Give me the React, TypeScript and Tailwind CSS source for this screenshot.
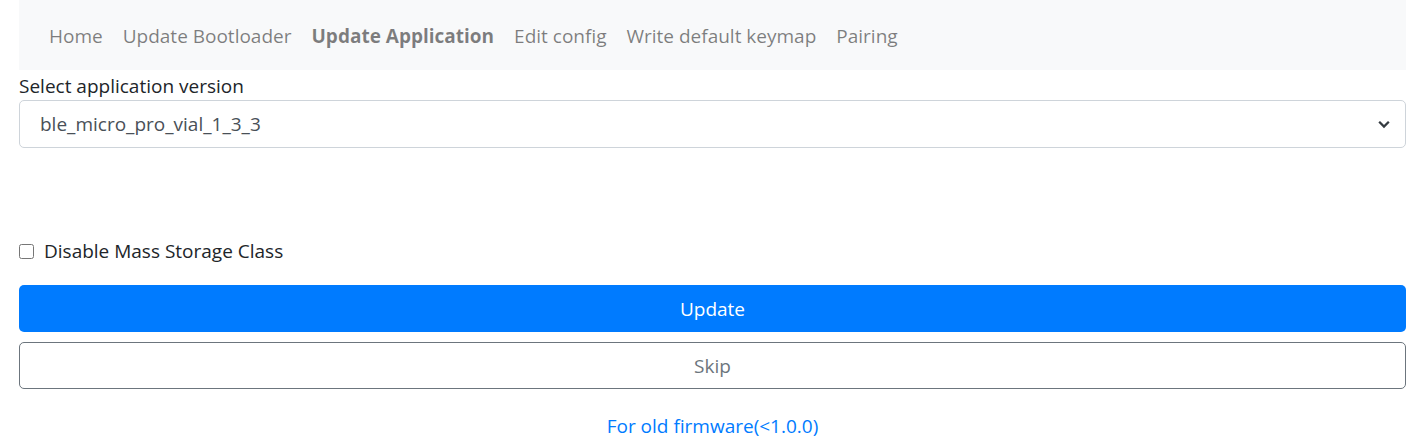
const links = [
  { label: 'Home', active: false },
  { label: 'Update Bootloader', active: false },
  { label: 'Update Application', active: true },
  { label: 'Edit config', active: false },
  { label: 'Write default keymap', active: false },
  { label: 'Pairing', active: false },
];

export default function App() {
  return (
    <div className="min-h-[438px] bg-white px-[19px] font-['Open_Sans',sans-serif] text-[19px] leading-[30px] text-[#212529]">
      <nav className="flex h-[70px] items-center bg-[#f8f9fa] px-[20px] pt-[2px]">
        {links.map((link) => (
          <a
            key={link.label}
            href="#"
            className={`px-[10px] text-black/50 ${link.active ? 'font-bold' : ''}`}
          >
            {link.label}
          </a>
        ))}
      </nav>

      <label className="block pt-[2px] leading-[28px]">Select application version</label>
      <div className="relative">
        <select className="h-[48px] w-full appearance-none rounded-[5px] border border-[#ced4da] bg-white pl-[20px] pr-[40px] text-[#495057]">
          <option>ble_micro_pro_vial_1_3_3</option>
        </select>
        <svg
          className="pointer-events-none absolute right-[15px] top-1/2 h-[14px] w-[14px] -translate-y-1/2"
          viewBox="0 0 16 16"
        >
          <path d="M2.5 5.5 8 11l5.5-5.5" fill="none" stroke="#343a40" strokeWidth="2.6" />
        </svg>
      </div>

      {/* empty progress area */}
      <div className="h-[88px]" />

      <label className="flex items-center gap-[10px]">
        <input type="checkbox" className="h-[15px] w-[15px]" />
        Disable Mass Storage Class
      </label>

      <div className="mt-[19px] flex flex-col gap-[10px]">
        <button className="h-[47px] w-full rounded-[5px] bg-[#007bff] text-white">Update</button>
        <button className="h-[47px] w-full rounded-[5px] border border-[#6c757d] bg-white text-[#6c757d]">
          Skip
        </button>
      </div>

      <div className="mt-[22px] text-center">
        <a href="#" className="text-[#007bff]">
          For old firmware(&lt;1.0.0)
        </a>
      </div>
    </div>
  );
}
